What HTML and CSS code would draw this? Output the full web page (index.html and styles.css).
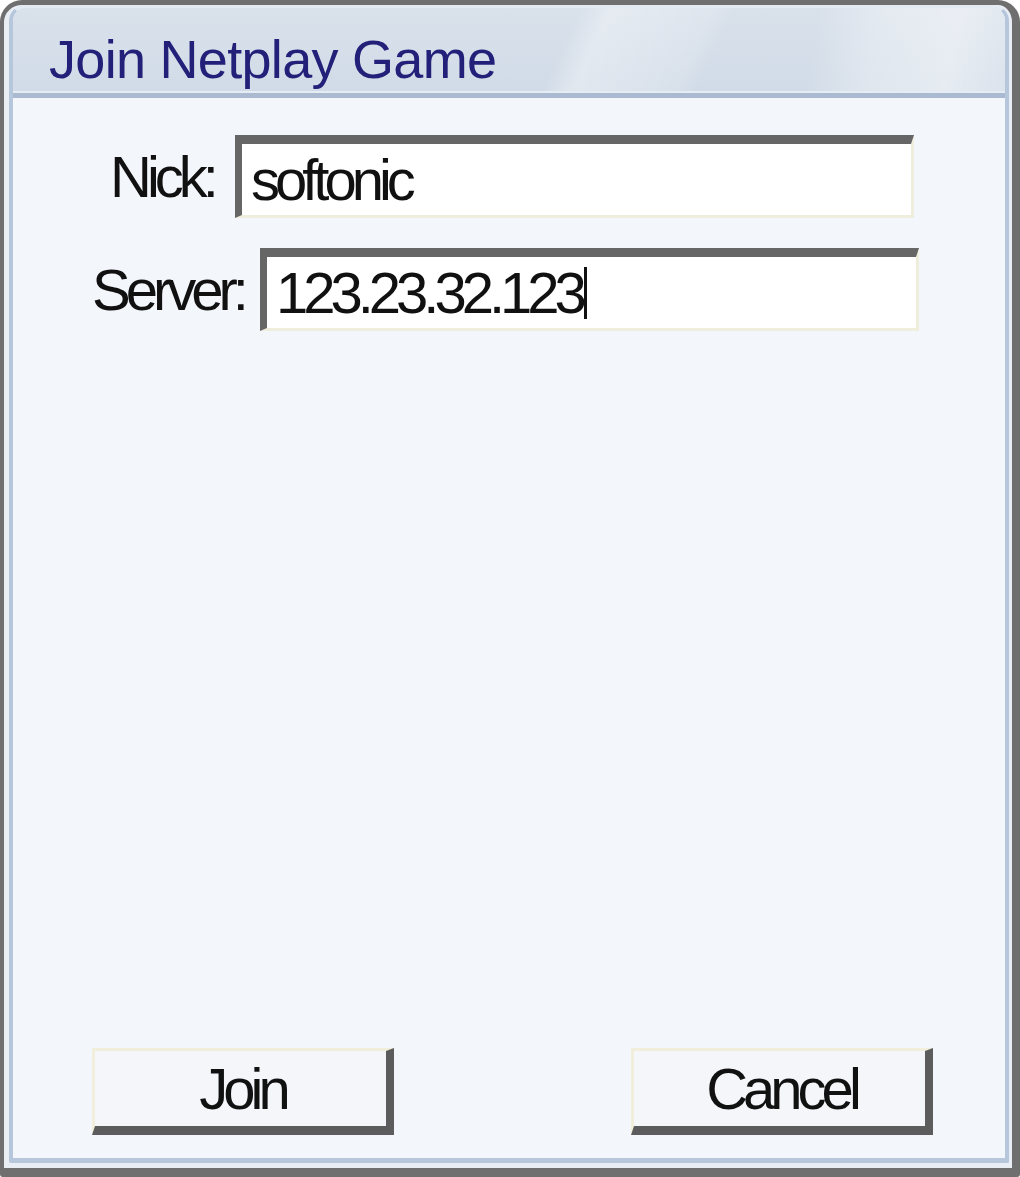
FILE: index.html
```html
<!DOCTYPE html>
<html lang="en">
<head>
    <meta charset="UTF-8">
    <meta name="viewport" content="width=device-width, initial-scale=1.0">
    <title>Join Netplay Game</title>
    <link rel="stylesheet" href="styles.css">
</head>
<body>

<div class="window">
    <div class="frame">
        <div class="titlebar">
            <h1>Join Netplay Game</h1>
        </div>

        <div class="client">
            <div class="row row-nick">
                <label class="label">Nick:</label>
                <div class="field">softonic</div>
            </div>
            <div class="row row-server">
                <label class="label">Server:</label>
                <div class="field">123.23.32.123<span class="caret"></span></div>
            </div>

            <div class="spacer"></div>

            <div class="buttons">
                <button class="btn">Join</button>
                <button class="btn">Cancel</button>
            </div>
        </div>
    </div>
</div>

</body>
</html>
```

FILE: styles.css
```css
body {
    margin: 0;
    background-color: #ffffff;
    font-family: 'Liberation Sans', Arial, sans-serif;
}
.window {
    width: 1020px;
    height: 1177px;
    box-sizing: border-box;
    border-style: solid;
    border-color: #6f6f6f;
    border-width: 5px 8px 9px 4px;
    border-radius: 22px 22px 3px 3px;
    background-color: #e9eef5;
    padding: 0 3px 5px 5px;
}
.frame {
    height: 100%;
    box-sizing: border-box;
    border-style: solid;
    border-color: #e4eaf2 #b6c6db #b6c6db #b6c6db;
    border-width: 3px 4px 5px 4px;
    border-radius: 16px 16px 2px 2px;
    display: flex;
    flex-direction: column;
    overflow: hidden;
}
.titlebar {
    height: 90px;
    flex-shrink: 0;
    box-sizing: border-box;
    border-bottom: 5px solid #a9bad1;
    box-shadow: inset 0 -2px 0 #e6ecf4;
    background:
        linear-gradient(115deg, transparent 0%, transparent 55%, rgba(255, 255, 255, 0.35) 58%, rgba(255, 255, 255, 0.15) 68%, transparent 70%),
        linear-gradient(100deg, transparent 80%, rgba(255, 255, 255, 0.3) 86%, rgba(255, 255, 255, 0.45) 94%, rgba(255, 255, 255, 0.2) 100%),
        linear-gradient(to bottom, #d9e1eb, #d1dbe7);
    display: flex;
    align-items: flex-end;
    padding: 0 0 7px 36px;
}
h1 {
    margin: 0;
    font-size: 54px;
    font-weight: normal;
    color: #23207a;
    line-height: 1;
    letter-spacing: -0.7px;
}
.client {
    flex: 1;
    background-color: #f3f6fb;
    display: flex;
    flex-direction: column;
    padding-top: 37px;
}
.row {
    display: flex;
    align-items: center;
    height: 83px;
}
.row-nick {
    padding: 0 91px 0 97px;
    gap: 21px;
}
.row-server {
    margin-top: 30px;
    padding: 0 86px 0 79px;
    gap: 16px;
}
.label, .field, .btn {
    font-family: 'Liberation Sans', Arial, sans-serif;
    font-size: 58px;
    letter-spacing: -5px;
    color: #111111;
}
.field {
    flex: 1;
    height: 83px;
    box-sizing: border-box;
    background-color: #ffffff;
    border-style: solid;
    border-color: #666666 #efeddc #efeddc #666666;
    border-width: 9px 3px 3px 7px;
    padding-left: 9px;
    display: flex;
    align-items: center;
}
.caret {
    display: inline-block;
    width: 3px;
    height: 52px;
    background-color: #111111;
    margin-left: 2px;
}
.spacer {
    flex: 1;
}
.buttons {
    display: flex;
    justify-content: space-between;
    padding: 0 72px 23px 79px;
}
.btn {
    width: 302px;
    height: 87px;
    box-sizing: border-box;
    background-color: #f4f6fa;
    border-style: solid;
    border-color: #f1eedb #5c5c5c #5c5c5c #f1eedb;
    border-width: 3px 8px 9px 3px;
    padding: 0 0 0 4px;
    cursor: pointer;
}
```
